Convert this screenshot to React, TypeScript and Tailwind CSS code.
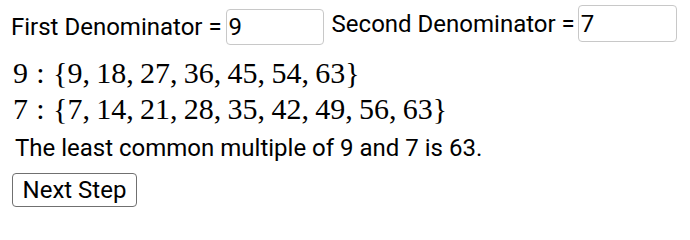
import React from "react";

const Seq = ({ n, items }: { n: number; items: number[] }) => (
  <div className="flex items-baseline whitespace-pre font-['Liberation_Serif',serif] text-[30px] leading-[36px]">
    <span>{n}</span>
    <span className="mx-[0.278em]">:</span>
    <span>{"{"}</span>
    {items.map((v, i) => (
      <span key={v}>
        {v}
        {i < items.length - 1 && <span className="mr-[0.21em]">,</span>}
      </span>
    ))}
    <span>{"}"}</span>
  </div>
);

export default function App() {
  return (
    <div className="h-[219px] w-[690px] bg-white text-black font-['Roboto',sans-serif] text-[24px]">
      <div className="flex items-start">
        <div className="flex items-center pl-[11px] pt-[9px]">
          <span className="leading-[28px]">First Denominator =</span>
          <input
            defaultValue="9"
            className="ml-[4px] h-[36px] w-[98px] rounded-[4px] border border-[#c8c8c8] px-[2px] text-[24px] outline-none"
          />
        </div>
        <div className="flex items-center pl-[8px] pt-[5px]">
          <span className="leading-[28px]">Second Denominator =</span>
          <input
            defaultValue="7"
            className="ml-[3px] h-[37px] w-[99px] rounded-[4px] border border-[#c8c8c8] px-[2px] text-[24px] outline-none"
          />
        </div>
      </div>
      <div className="pl-[13px] pt-[10px]">
        <Seq n={9} items={[9, 18, 27, 36, 45, 54, 63]} />
        <Seq n={7} items={[7, 14, 21, 28, 35, 42, 49, 56, 63]} />
      </div>
      <p className="pl-[15px] pt-[7px] leading-[28px]">
        The least common multiple of 9 and 7 is 63.
      </p>
      <div className="pl-[12px] pt-[10px]">
        <button className="h-[34px] w-[125px] rounded-[4px] border border-[#707070] bg-white text-[24px] leading-none">
          Next Step
        </button>
      </div>
    </div>
  );
}
